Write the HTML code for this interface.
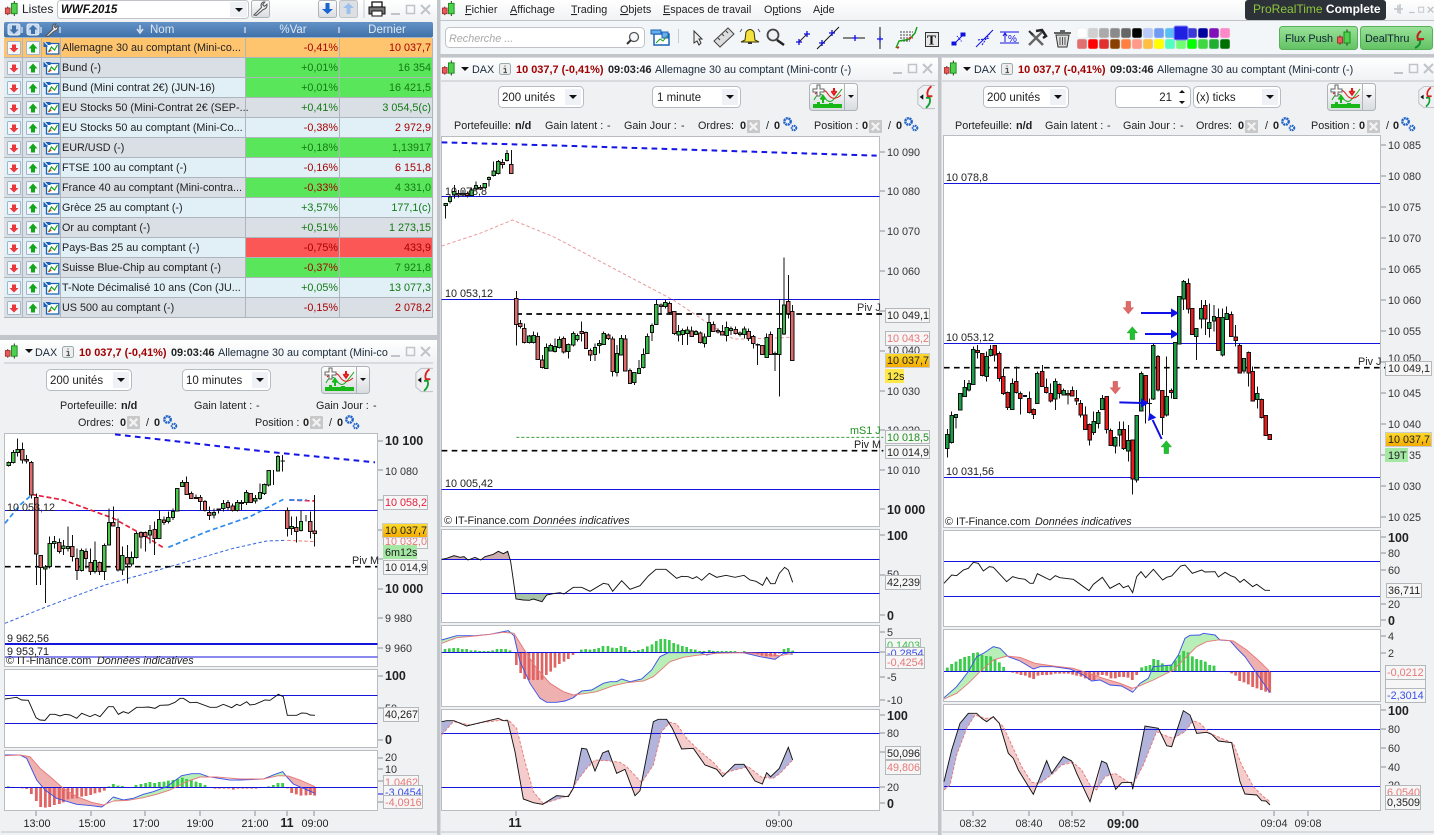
<!DOCTYPE html>
<html><head><meta charset="utf-8"><title>ProRealTime</title>
<style>
html,body{margin:0;padding:0;background:#eff1f3;width:1434px;height:835px;overflow:hidden}
svg{display:block;position:absolute;left:0;top:0}
text{font-family:"Liberation Sans",sans-serif;font-size:10.8px;fill:#222}
.b{font-weight:bold;font-size:10.9px}
.ax{font-size:10.8px;fill:#333}
.axb{font-size:12.5px;font-weight:bold;fill:#222}
.r{text-anchor:end}
.m{text-anchor:middle}
.tit{fill:#1a2a3a}
.pr{font-weight:bold;fill:#a00000;font-size:10.95px}
.u{text-decoration:underline}
.box{fill:#f6f6f6;stroke:#b4b8bb}
.sel{fill:#fff;stroke:#b6bcc2}
.ln{stroke:#1414dc;stroke-width:3;fill:none;shape-rendering:crispEdges}
.cw{stroke:#111;stroke-width:3;fill:none}
.mk{stroke:#8b9094;stroke-width:1;fill:none}
.bx{fill:#fff;stroke:#b9bdc1}
</style></head><body>
<svg width="1434" height="835" viewBox="0 0 1434 835" xmlns="http://www.w3.org/2000/svg">
<defs>
<linearGradient id="tb" x1="0" y1="0" x2="0" y2="1"><stop offset="0" stop-color="#fff"/><stop offset="1" stop-color="#f0f2f4"/></linearGradient>
<linearGradient id="hd" x1="0" y1="0" x2="0" y2="1"><stop offset="0" stop-color="#6292c6"/><stop offset="1" stop-color="#3f70a8"/></linearGradient>
<linearGradient id="yl" x1="0" y1="0" x2="0" y2="1"><stop offset="0" stop-color="#ffdc2e"/><stop offset="1" stop-color="#f2a900"/></linearGradient>
<linearGradient id="gb" x1="0" y1="0" x2="0" y2="1"><stop offset="0" stop-color="#9ae29a"/><stop offset="1" stop-color="#62c262"/></linearGradient>
<linearGradient id="bb" x1="0" y1="0" x2="0" y2="1"><stop offset="0" stop-color="#fff"/><stop offset="1" stop-color="#d8dce0"/></linearGradient>
<symbol id="lg" viewBox="0 0 16 17"><path d="M4 6V15M11 0V16" stroke="#222" fill="none"/><rect x="1.5" y="7.5" width="5" height="6" fill="#e85a5a" stroke="#a33"/><rect x="8" y="2.5" width="6" height="11" fill="#4fd04f" stroke="#1a8a1a"/></symbol>
<symbol id="sl" viewBox="0 0 14 14"><rect x=".5" y=".5" width="13" height="13" rx="1" fill="#f4f8fc" stroke="#a4b6c8"/><path d="M7 11.500L2.500 7H5V3.500H9V7H11.500Z" fill="#e8383c"/></symbol>
<symbol id="by" viewBox="0 0 14 14"><rect x=".5" y=".5" width="13" height="13" rx="1" fill="#f4f8fc" stroke="#a4b6c8"/><path d="M7 2.500L11.500 7.500H9V11.500H5V7.500H2.500Z" fill="#10a818"/></symbol>
<symbol id="ch" viewBox="0 0 16 14"><path d="M3 2.500H15.300V13H3Z" fill="#fff" stroke="#1c62b8" stroke-width="1.300"/><path d="M0 1H7V4H4V6H0Z" fill="#1c62b8"/><path d="M1 1L4 4" stroke="#fff"/><path d="M5 11L8 6L11 9L14 4" stroke="#1aa01a" fill="none" stroke-width="1.200"/><path d="M5 11L8 9" stroke="#e02020" fill="none"/></symbol>
<symbol id="ri" viewBox="0 0 53 14"><use href="#sl" x="0" y="0" width="14" height="14"/><use href="#by" x="19" y="0" width="14" height="14"/><use href="#ch" x="36" y="0" width="17" height="14"/></symbol>
<symbol id="wc" viewBox="0 0 40 12"><path d="M0 10H9" stroke="#c0c4c8" stroke-width="2"/><rect x="15.500" y="1.500" width="8" height="8" fill="none" stroke="#c0c4c8" stroke-width="1.500"/><path d="M30 1L39 10M39 1L30 10" stroke="#c0c4c8" stroke-width="2"/></symbol>
<symbol id="ib" viewBox="0 0 12 12"><rect x=".5" y=".5" width="11" height="11" rx="2" fill="#eee" stroke="#9aa"/><path d="M6 2.500V3.500M4.500 5.500H6.500V9M4.500 9.500H8" stroke="#555" fill="none" stroke-width="1.200"/></symbol>
<symbol id="or" viewBox="0 0 14 14"><rect x="0" y="0" width="14" height="14" rx="1" fill="#c8c8c8"/><path d="M3 3L11 11M11 3L3 11" stroke="#f2f2f2" stroke-width="2.500"/></symbol>
<symbol id="ge" viewBox="0 0 16 16"><circle cx="5.500" cy="5.500" r="3.200" fill="none" stroke="#1e62c8" stroke-width="2.400" stroke-dasharray="2 .6"/><circle cx="12" cy="12" r="2.300" fill="none" stroke="#1e62c8" stroke-width="2" stroke-dasharray="1.500 .6"/></symbol>
<symbol id="ind" viewBox="0 0 49 28"><rect x=".5" y=".5" width="48" height="27" rx="3" fill="url(#bb)" stroke="#aeb3b8"/><path d="M35.500 1V27" stroke="#aeb3b8"/><rect x="4" y="21" width="29" height="4" fill="#18b818"/><rect x="8" y="19" width="3" height="3" fill="#18b818"/><rect x="20" y="20" width="4" height="2" fill="#18b818"/><path d="M5 17Q10 7 15 14T24 17T33 6" stroke="#18a818" fill="none"/><path d="M6 11Q14 3 19 11T32 12" stroke="#e01818" fill="none"/><path d="M14 20V15M11.500 16.500L14 13L16.500 16.500" stroke="#18b818" fill="none" stroke-width="2"/><path d="M25 5V9M22.500 8L25 11.500L27.500 8" stroke="#e01818" fill="none" stroke-width="2"/><path d="M4 6H8V2H11V6H15V9H11V13H8V9H4Z" fill="#fff" stroke="#666"/><path d="M39 12H45L42 15Z" fill="#111"/></symbol>
<symbol id="tab" viewBox="0 0 20 28"><path d="M20 1H7L1 6V22L7 27H20" fill="#eef0f2" stroke="#b4b8bc"/><path d="M3 14L7 11V17Z" fill="#111"/><path d="M16 2Q10 7 12 13H17L11 14" stroke="#d82020" fill="none" stroke-width="2"/><path d="M10 26Q16 21 14 15H10" stroke="#10a030" fill="none" stroke-width="2"/></symbol>
<symbol id="wr" viewBox="0 0 14 14"><path d="M1 13L8 6Q6.500 2.500 9.500 1L11 1L9 3.500L10.500 5L13 3Q13.500 7 9.500 8L3 13.500Z" fill="#f4f4f4" stroke="#555"/></symbol>
</defs>

<!-- backgrounds -->
<rect width="1434" height="835" fill="#eff1f3"/>
<rect x="438" y="0" width="996" height="20" fill="url(#tb)"/>
<rect x="438" y="20" width="996" height="1" fill="#bfc4c8"/>
<rect x="438" y="21" width="996" height="33" fill="#f3f6f8"/>
<rect x="438" y="54" width="996" height="3.500" fill="#c2c6ca"/>
<rect x="0" y="0" width="437" height="21" fill="url(#tb)"/>
<rect x="0" y="335" width="437" height="5" fill="#c2c6ca"/>
<rect x="437" y="0" width="3.500" height="835" fill="#c2c6ca"/>
<rect x="938" y="57" width="3.500" height="778" fill="#c2c6ca"/>
<rect x="0" y="340" width="437" height="22" fill="url(#tb)"/>
<rect x="441" y="58" width="497" height="22" fill="url(#tb)"/>
<rect x="942" y="58" width="492" height="22" fill="url(#tb)"/>
<path d="M4 363H433M441 81H938M942 81H1434M1 832H437M441 832H938M942 832H1434" stroke="#c0c4c8"/>

<!-- Watchlist header -->
<use href="#lg" x="4" y="1" width="15" height="16"/>
<text x="22" y="13" style="font-size:12px">Listes</text>
<rect x="57.500" y=".5" width="191" height="18" rx="3" fill="#fff" stroke="#c0c4c8"/>
<text x="61" y="13" style="font-size:11.500px;font-weight:bold;font-style:italic;fill:#111">WWF.2015</text>
<rect x="230" y="2" width="17" height="15" fill="#eef2f6"/><path d="M235 8H243L239 12Z" fill="#111"/>
<rect x="251.500" y=".5" width="18" height="17" rx="2" fill="url(#bb)" stroke="#b0b4b8"/><use href="#wr" x="253" y="1" width="15" height="15"/>
<rect x="318.500" y=".5" width="18" height="17" rx="2" fill="url(#bb)" stroke="#b0b4b8"/><path d="M327.500 14L322 9H325.500V3H329.500V9H333Z" fill="#1a66d0"/>
<rect x="339.500" y=".5" width="18" height="17" rx="2" fill="#dde0e3" stroke="#c0c4c8"/><path d="M348.500 3L343 8H346.500V14H350.500V8H354Z" fill="#9cc0ec"/>
<path d="M364 0V18" stroke="#c8ccd0"/>
<path d="M372 2H382V7H372Z" fill="#fff" stroke="#111" stroke-width="1.300"/><path d="M369 7H385V14H369Z" fill="#777" stroke="#111"/><path d="M372 11H382V16H372Z" fill="#fff" stroke="#111"/>
<use href="#wc" x="391" y="4" width="40" height="12"/>

<rect x="4" y="22" width="429" height="15.500" rx="2" fill="url(#hd)"/>
<path d="M22 27V33M41 27V33M60 27V33M245 27V33M339 27V33" stroke="#fff"/>
<rect x="8" y="24" width="12" height="11" rx="2" fill="#c4d8ee" stroke="#e8f0f8"/><path d="M14 34L9.500 29.500H12V25.500H16V29.500H18.500Z" fill="#3f70a8"/>
<rect x="27" y="24" width="12" height="11" rx="2" fill="#c4d8ee" stroke="#e8f0f8"/><path d="M33 25L28.500 29.500H31V34H35V29.500H37.500Z" fill="#3f70a8"/>
<use href="#wr" x="45" y="23" width="14" height="14"/>
<path d="M140 25V31M137 29L140 33L143 29" stroke="#dde6f0" fill="none" stroke-width="1.500"/>
<text x="150" y="33" style="fill:#dfe8f2;font-size:11.500px">Nom</text>
<text x="293" y="33" class="m" style="fill:#dfe8f2;font-size:11.500px">%Var</text>
<text x="387" y="33" class="m" style="fill:#dfe8f2;font-size:11.500px">Dernier</text>

<!-- Rows -->
<g>
<rect x="4" y="38" width="429" height="20" fill="#ffc56e"/>
<rect x="4" y="58" width="429" height="20" fill="#d9dfe5"/>
<rect x="4" y="78" width="429" height="20" fill="#e1eff7"/>
<rect x="4" y="98" width="429" height="20" fill="#d9dfe5"/>
<rect x="4" y="118" width="429" height="20" fill="#e1eff7"/>
<rect x="4" y="138" width="429" height="20" fill="#d9dfe5"/>
<rect x="4" y="158" width="429" height="20" fill="#e1eff7"/>
<rect x="4" y="178" width="429" height="20" fill="#d9dfe5"/>
<rect x="4" y="198" width="429" height="20" fill="#e1eff7"/>
<rect x="4" y="218" width="429" height="20" fill="#d9dfe5"/>
<rect x="4" y="238" width="429" height="20" fill="#e1eff7"/>
<rect x="4" y="258" width="429" height="20" fill="#d9dfe5"/>
<rect x="4" y="278" width="429" height="20" fill="#e1eff7"/>
<rect x="4" y="298" width="429" height="20" fill="#d9dfe5"/>
<path d="M246 58h186v20h-186zM246 78h186v20h-186zM246 138h186v20h-186zM246 178h186v20h-186zM246 258h186v20h-186z" fill="#5ae65a"/>
<rect x="246" y="238" width="186" height="20" fill="#fb5757"/>
<path d="M4 57.500H433M4 77.500H433M4 97.500H433M4 117.500H433M4 137.500H433M4 157.500H433M4 177.500H433M4 197.500H433M4 217.500H433M4 237.500H433M4 257.500H433M4 277.500H433M4 297.500H433M4 317.500H433M22.500 38V318M41.500 38V318M60.500 38V318M245.500 38V318M339.500 38V318M432.500 38V318" stroke="#aeb5bb" fill="none"/>
<use href="#ri" x="7" y="41" width="53" height="14"/><use href="#ri" x="7" y="61" width="53" height="14"/><use href="#ri" x="7" y="81" width="53" height="14"/><use href="#ri" x="7" y="101" width="53" height="14"/><use href="#ri" x="7" y="121" width="53" height="14"/><use href="#ri" x="7" y="141" width="53" height="14"/><use href="#ri" x="7" y="161" width="53" height="14"/><use href="#ri" x="7" y="181" width="53" height="14"/><use href="#ri" x="7" y="201" width="53" height="14"/><use href="#ri" x="7" y="221" width="53" height="14"/><use href="#ri" x="7" y="241" width="53" height="14"/><use href="#ri" x="7" y="261" width="53" height="14"/><use href="#ri" x="7" y="281" width="53" height="14"/><use href="#ri" x="7" y="301" width="53" height="14"/>
</g>
<g style="fill:#111">
<text x="62" y="51">Allemagne 30 au comptant (Mini-co...</text>
<text x="62" y="71">Bund (-)</text>
<text x="62" y="91">Bund (Mini contrat 2€) (JUN-16)</text>
<text x="62" y="111">EU Stocks 50 (Mini-Contrat 2€ (SEP-...</text>
<text x="62" y="131">EU Stocks 50 au comptant (Mini-Co...</text>
<text x="62" y="151">EUR/USD (-)</text>
<text x="62" y="171">FTSE 100 au comptant (-)</text>
<text x="62" y="191">France 40 au comptant (Mini-contra...</text>
<text x="62" y="211">Grèce 25 au comptant (-)</text>
<text x="62" y="231">Or au comptant (-)</text>
<text x="62" y="251">Pays-Bas 25 au comptant (-)</text>
<text x="62" y="271">Suisse Blue-Chip au comptant (-)</text>
<text x="62" y="291">T-Note Décimalisé 10 ans (Con (JU...</text>
<text x="62" y="311">US 500 au comptant (-)</text>
</g>
<g class="r" style="text-anchor:end">
<text x="338" y="51" style="fill:#a80000">-0,41%</text><text x="431" y="51" style="fill:#a80000">10 037,7</text>
<text x="338" y="131" style="fill:#a80000">-0,38%</text><text x="431" y="131" style="fill:#a80000">2 972,9</text>
<text x="338" y="171" style="fill:#a80000">-0,16%</text><text x="431" y="171" style="fill:#a80000">6 151,8</text>
<text x="338" y="191" style="fill:#a80000">-0,33%</text>
<text x="338" y="251" style="fill:#a80000">-0,75%</text><text x="431" y="251" style="fill:#a80000">433,9</text>
<text x="338" y="271" style="fill:#a80000">-0,37%</text>
<text x="338" y="311" style="fill:#a80000">-0,15%</text><text x="431" y="311" style="fill:#a80000">2 078,2</text>
<text x="338" y="71" style="fill:#127a12">+0,01%</text><text x="431" y="71" style="fill:#127a12">16 354</text>
<text x="338" y="91" style="fill:#127a12">+0,01%</text><text x="431" y="91" style="fill:#127a12">16 421,5</text>
<text x="338" y="111" style="fill:#127a12">+0,41%</text><text x="431" y="111" style="fill:#127a12">3 054,5(c)</text>
<text x="338" y="151" style="fill:#127a12">+0,18%</text><text x="431" y="151" style="fill:#127a12">1,13917</text>
<text x="431" y="191" style="fill:#127a12">4 331,0</text>
<text x="338" y="211" style="fill:#127a12">+3,57%</text><text x="431" y="211" style="fill:#127a12">177,1(c)</text>
<text x="338" y="231" style="fill:#127a12">+0,51%</text><text x="431" y="231" style="fill:#127a12">1 273,15</text>
<text x="431" y="271" style="fill:#127a12">7 921,8</text>
<text x="338" y="291" style="fill:#127a12">+0,05%</text><text x="431" y="291" style="fill:#127a12">13 077,3</text>
</g>

<!-- Menu -->
<use href="#lg" x="441" y="1" width="15" height="16"/>
<g style="fill:#111">
<text x="465" y="13"><tspan class="u">F</tspan>ichier</text>
<text x="510" y="13"><tspan class="u">A</tspan>ffichage</text>
<text x="571" y="13"><tspan class="u">T</tspan>rading</text>
<text x="620" y="13"><tspan class="u">O</tspan>bjets</text>
<text x="663" y="13"><tspan class="u">E</tspan>spaces de travail</text>
<text x="764" y="13">O<tspan class="u">p</tspan>tions</text>
<text x="813" y="13">A<tspan class="u">i</tspan>de</text>
</g>
<rect x="1245" y="0" width="141" height="20" rx="3" fill="#2c3238"/>
<text x="1253" y="13" style="font-size:12px;fill:#8fc63d">ProRealTime <tspan style="fill:#fff;font-weight:bold">Complete</tspan></text>
<path d="M1394 9H1403M1398 5V13M1400 4V14" stroke="#c0c4c8" stroke-width="1.500" fill="none"/>
<use href="#wc" x="1409" y="4" width="25" height="12" preserveAspectRatio="xMinYMid slice"/>

<!-- Toolbar -->
<rect x="445.500" y="27.500" width="199" height="20" rx="4" fill="#fff" stroke="#c0c4c8"/>
<text x="449" y="42" style="font-style:italic;fill:#a8a8a8">Recherche ...</text>
<circle cx="634" cy="37" r="4.500" fill="#f4f8fc" stroke="#555" stroke-width="1.300"/><path d="M631 40L627 44" stroke="#333" stroke-width="2"/>
<path d="M654 34H669V45H654Z" fill="#fff" stroke="#1c62b8" stroke-width="1.500"/><path d="M651 30H661V34H651Z" fill="#64b0ea" stroke="#1c62b8"/><path d="M662 32H668V38H662Z" fill="#64b0ea" stroke="#1c62b8"/><path d="M656 43L660 39L663 41L667 36" stroke="#18a018" fill="none"/>
<path d="M678.500 29V43" stroke="#c8ccd0"/>
<path d="M694 31L702 39H699L701 43L699 45L697 41L694 43Z" fill="#eee" stroke="#333"/>
<path d="M714 41L728 28L734 34L720 47Z" fill="#ddd" stroke="#444"/><path d="M718 38L720 40M722 34L724 36M726 31L728 33" stroke="#444"/>
<path d="M741 42L745 40L746 32Q750 27 754 32L755 40L759 42Z" fill="#f4e040" stroke="#3a3a00"/><path d="M748 43H752" stroke="#333" stroke-width="2"/><path d="M740 32L742 29M760 32L758 29" stroke="#555"/>
<circle cx="773" cy="35" r="5.500" fill="#eef2f6" stroke="#444" stroke-width="1.800"/><path d="M777 40L784 45" stroke="#222" stroke-width="2.500"/>
<path d="M799 42L807 34" stroke="#222"/>
<path d="M817 49L839 27M843 38H865M880 27V49" stroke="#111"/>
<path d="M796 42h6M799 39v6M804 34h6M807 31v6M819 43h6M822 40v6M829 33h6M832 30v6M852 38h6M855 35v6M877 39h6M880 36v6" stroke="#1010e0" fill="none" stroke-width="1.300"/>
<path d="M900 32H913M900 35H913M900 38H913M900 41H910" stroke="#444" stroke-dasharray="2 1"/>
<path d="M896 48L899 41L905 40L910 39L915 33L917 27" stroke="#10a010" fill="none" stroke-width="1.400"/><path d="M897 48L899 47M909 39L911 37" stroke="#e02020" stroke-width="2"/>
<rect x="925.500" y="32.500" width="13" height="14" fill="#e8e8e8" stroke="#333"/><text x="927" y="44.500" style="font-family:'Liberation Serif',serif;font-weight:bold;font-size:13.500px;fill:#111">T</text>
<path d="M954 44L964 34" stroke="#1010e0"/><path d="M952 42h4v3h-4zM961 33h4v3h-4z" fill="#1010e0" stroke="#1010e0"/><path d="M957 36L962 42" stroke="#1010e0" stroke-dasharray="1 1"/>
<path d="M976 47L993 30" stroke="#1010e0" fill="none"/><path d="M978 40L990 38M982 45l8-12" stroke="#1010e0" fill="none" stroke-dasharray="2 1"/>
<path d="M1000 32H1019M1000 43H1019" stroke="#1010e0"/><path d="M1005 42V34M1003 36L1005 33L1007 36" stroke="#1010e0" fill="none"/><text x="1008" y="42" style="font-size:10px;fill:#1010e0">%</text>
<path d="M1029 45L1042 32" stroke="#fff" stroke-width="3.500"/><path d="M1029 45L1042 32M1031 33L1043 45" stroke="#666" stroke-width="2.500"/><path d="M1036 31L1042 30L1046 36L1043 38" stroke="#222" stroke-width="2.500" fill="none"/><path d="M1029 31L1033 35" stroke="#333" stroke-width="2"/>
<path d="M1056 35H1069L1067 47H1058Z" fill="#ddd" stroke="#333"/><path d="M1054 33H1071M1060 31H1065" stroke="#333" stroke-width="1.500"/><path d="M1060 37V45M1062.500 37V45M1065 37V45" stroke="#555"/>
<!-- palette -->
<g stroke="#e0e4e8" stroke-width=".5">
<rect x="1077" y="28" width="10" height="10" rx="2" fill="#fff"/><rect x="1088" y="28" width="10" height="10" rx="2" fill="#d0d0d0"/><rect x="1099" y="28" width="10" height="10" rx="2" fill="#aaa"/><rect x="1110" y="28" width="10" height="10" rx="2" fill="#8a8a8a"/><rect x="1121" y="28" width="10" height="10" rx="2" fill="#666"/><rect x="1132" y="28" width="10" height="10" rx="2" fill="#000"/><rect x="1143" y="28" width="10" height="10" rx="2" fill="#b8caf8"/><rect x="1154" y="28" width="10" height="10" rx="2" fill="#6e9cf4"/><rect x="1165" y="28" width="10" height="10" rx="2" fill="#56c0f4"/><rect x="1187" y="28" width="10" height="10" rx="2" fill="#3a3ad8"/><rect x="1198" y="28" width="10" height="10" rx="2" fill="#00009c"/><rect x="1209" y="28" width="10" height="10" rx="2" fill="#8010b8"/><rect x="1220" y="28" width="10" height="10" rx="2" fill="#ff88c8"/>
<rect x="1077" y="39" width="10" height="10" rx="2" fill="#e07070"/><rect x="1088" y="39" width="10" height="10" rx="2" fill="#f00"/><rect x="1099" y="39" width="10" height="10" rx="2" fill="#e03030"/><rect x="1110" y="39" width="10" height="10" rx="2" fill="#8a4000"/><rect x="1121" y="39" width="10" height="10" rx="2" fill="#ff8040"/><rect x="1132" y="39" width="10" height="10" rx="2" fill="#ff9a88"/><rect x="1143" y="39" width="10" height="10" rx="2" fill="#ffc040"/><rect x="1154" y="39" width="10" height="10" rx="2" fill="#ff0"/><rect x="1165" y="39" width="10" height="10" rx="2" fill="#50ffc0"/><rect x="1176" y="39" width="10" height="10" rx="2" fill="#70ff70"/><rect x="1187" y="39" width="10" height="10" rx="2" fill="#0f0"/><rect x="1198" y="39" width="10" height="10" rx="2" fill="#40d840"/><rect x="1209" y="39" width="10" height="10" rx="2" fill="#20b030"/><rect x="1220" y="39" width="10" height="10" rx="2" fill="#007000"/>
</g>
<rect x="1174" y="26" width="14" height="14" rx="2" fill="#2020e0" stroke="#8888ff"/>
<rect x="1279.500" y="26.500" width="78" height="23" rx="3" fill="url(#gb)" stroke="#58b058"/>
<text x="1285" y="42" style="fill:#123">Flux Push</text><use href="#lg" x="1336" y="29" width="16" height="18"/>
<rect x="1360.500" y="26.500" width="72" height="23" rx="3" fill="url(#gb)" stroke="#58b058"/>
<text x="1365" y="42" style="fill:#123">DealThru</text>
<path d="M1421 31Q1416 35 1418 39H1424L1417 40" stroke="#c02020" fill="none" stroke-width="2"/><path d="M1415 48Q1421 45 1420 40" stroke="#109030" fill="none" stroke-width="2"/>

<!-- Window titles -->
<use href="#lg" x="441" y="60" width="15" height="17"/><path d="M461 67h8l-4 4z" fill="#111"/>
<text x="472" y="73" class="tit">DAX</text><use href="#ib" x="499" y="63" width="12" height="12"/>
<text x="516" y="73" class="pr">10 037,7 (-0,41%)</text><text x="608" y="73" class="b">09:03:46</text>
<text x="655" y="73" class="tit">Allemagne 30 au comptant (Mini-contr (-)</text>
<use href="#wc" x="893" y="63" width="40" height="12"/>
<use href="#lg" x="943" y="60" width="15" height="17"/><path d="M963 67h8l-4 4z" fill="#111"/>
<text x="974" y="73" class="tit">DAX</text><use href="#ib" x="1001" y="63" width="12" height="12"/>
<text x="1018" y="73" class="pr">10 037,7 (-0,41%)</text><text x="1110" y="73" class="b">09:03:46</text>
<text x="1157" y="73" class="tit">Allemagne 30 au comptant (Mini-contr (-)</text>
<use href="#wc" x="1394" y="63" width="40" height="12"/>
<use href="#lg" x="4" y="343" width="15" height="17"/><path d="M25 349h8l-4 4z" fill="#111"/>
<text x="35" y="356" class="tit">DAX</text><use href="#ib" x="62" y="346" width="12" height="12"/>
<text x="79" y="356" class="pr">10 037,7 (-0,41%)</text><text x="171" y="356" class="b">09:03:46</text>
<text x="218" y="356" class="tit">Allemagne 30 au comptant (Mini-co</text>
<use href="#wc" x="391" y="346" width="40" height="12"/>

<!-- Selects -->
<rect x="498.500" y="86.500" width="85" height="21" rx="4" class="sel"/><text x="502" y="101" style="font-size:11.500px">200 unités</text><rect x="565" y="89" width="16" height="16" fill="#eef2f6"/><path d="M569 95h8l-4 4z" fill="#111"/>
<rect x="652.500" y="86.500" width="88" height="21" rx="4" class="sel"/><text x="657" y="101" style="font-size:11.500px">1 minute</text><rect x="722" y="89" width="16" height="16" fill="#eef2f6"/><path d="M726 95h8l-4 4z" fill="#111"/>
<use href="#ind" x="809" y="83" width="49" height="28"/><use href="#tab" x="917" y="83" width="18" height="28"/>
<rect x="983.500" y="86.500" width="85" height="21" rx="4" class="sel"/><text x="987" y="101" style="font-size:11.500px">200 unités</text><rect x="1050" y="89" width="16" height="16" fill="#eef2f6"/><path d="M1054 95h8l-4 4z" fill="#111"/>
<rect x="1115.500" y="86.500" width="75" height="21" rx="4" class="sel"/><text x="1172" y="101" class="r" style="font-size:11.500px;text-anchor:end">21</text><path d="M1179 93l3-3l3 3zM1179 101l3 3l3-3z" fill="#111"/>
<rect x="1193.500" y="86.500" width="87" height="21" rx="4" class="sel"/><text x="1196" y="101" style="font-size:11.500px">(x) ticks</text><rect x="1262" y="89" width="16" height="16" fill="#eef2f6"/><path d="M1266 95h8l-4 4z" fill="#111"/>
<use href="#ind" x="1327" y="83" width="49" height="28"/><use href="#tab" x="1418" y="83" width="16" height="28"/>
<rect x="46.500" y="369.500" width="85" height="21" rx="4" class="sel"/><text x="50" y="384" style="font-size:11.500px">200 unités</text><rect x="113" y="372" width="16" height="16" fill="#eef2f6"/><path d="M117 378h8l-4 4z" fill="#111"/>
<rect x="182.500" y="369.500" width="88" height="21" rx="4" class="sel"/><text x="186" y="384" style="font-size:11.500px">10 minutes</text><rect x="252" y="372" width="16" height="16" fill="#eef2f6"/><path d="M256 378h8l-4 4z" fill="#111"/>
<use href="#ind" x="321" y="366" width="49" height="28"/><use href="#tab" x="415" y="366" width="18" height="28"/>

<!-- Info rows -->
<g style="fill:#111">
<text x="454" y="129">Portefeuille:</text><text x="515" y="129" class="b">n/d</text><text x="545" y="129">Gain latent :</text><text x="607" y="129">-</text><text x="624" y="129">Gain Jour :</text><text x="681" y="129">-</text><text x="698" y="129">Ordres:</text><text x="740" y="129" class="b">0</text><use href="#or" x="747" y="120" width="13" height="13"/><text x="766" y="129">/</text><text x="774" y="129" class="b">0</text><use href="#ge" x="782" y="116" width="16" height="16"/><text x="814" y="129">Position :</text><text x="862" y="129" class="b">0</text><use href="#or" x="869" y="120" width="13" height="13"/><text x="888" y="129">/</text><text x="896" y="129" class="b">0</text><use href="#ge" x="903" y="116" width="16" height="16"/>
<text x="955" y="129">Portefeuille:</text><text x="1016" y="129" class="b">n/d</text><text x="1045" y="129">Gain latent :</text><text x="1107" y="129">-</text><text x="1123" y="129">Gain Jour :</text><text x="1180" y="129">-</text><text x="1196" y="129">Ordres:</text><text x="1238" y="129" class="b">0</text><use href="#or" x="1245" y="120" width="13" height="13"/><text x="1265" y="129">/</text><text x="1273" y="129" class="b">0</text><use href="#ge" x="1280" y="116" width="16" height="16"/><text x="1311" y="129">Position :</text><text x="1359" y="129" class="b">0</text><use href="#or" x="1367" y="120" width="13" height="13"/><text x="1386" y="129">/</text><text x="1393" y="129" class="b">0</text><use href="#ge" x="1400" y="116" width="16" height="16"/>
<text x="60" y="409">Portefeuille:</text><text x="121" y="409" class="b">n/d</text><text x="194" y="409">Gain latent :</text><text x="256" y="409">-</text><text x="316" y="409">Gain Jour :</text><text x="373" y="409">-</text>
<text x="78" y="426">Ordres:</text><text x="120" y="426" class="b">0</text><use href="#or" x="127" y="416" width="13" height="13"/><text x="146" y="426">/</text><text x="154" y="426" class="b">0</text><use href="#ge" x="162" y="414" width="16" height="16"/><text x="255" y="426">Position :</text><text x="303" y="426" class="b">0</text><use href="#or" x="310" y="416" width="13" height="13"/><text x="329" y="426">/</text><text x="337" y="426" class="b">0</text><use href="#ge" x="344" y="414" width="16" height="16"/>
</g>

<!-- Chart frames -->
<rect x="4.500" y="433.500" width="373" height="233" class="bx"/><rect x="4.500" y="669.500" width="373" height="78" class="bx"/><rect x="4.500" y="750.500" width="373" height="60" class="bx"/>
<rect x="441.500" y="136.500" width="438" height="390" class="bx"/><rect x="441.500" y="529.500" width="438" height="93" class="bx"/><rect x="441.500" y="625.500" width="438" height="81" class="bx"/><rect x="441.500" y="709.500" width="438" height="101" class="bx"/>
<rect x="943.500" y="135.500" width="437" height="392" class="bx"/><rect x="943.500" y="530.500" width="437" height="96" class="bx"/><rect x="943.500" y="629.500" width="437" height="72" class="bx"/><rect x="943.500" y="704.500" width="437" height="106" class="bx"/>

<!-- MIDDLE main chart (zoom coords) -->
<g transform="translate(440,135) scale(.33333)">
<path d="M5 184H1318M5 493H1318M5 1063H1318" class="ln"/>
<path d="M5 333L120 295L217 255L340 305L700 495L800 562L880 612L920 612L1055 607" stroke="#e89a9a" stroke-width="3" fill="none" stroke-dasharray="10 7"/>
<path d="M5 22L400 33L1310 62" stroke="#1414e6" stroke-width="6" fill="none" stroke-dasharray="17 13"/>
<path d="M229 537H1330M5 947H1330" stroke="#000" stroke-width="5" fill="none" stroke-dasharray="17 13"/>
<path d="M229 907H1330" stroke="#209020" stroke-width="2.500" fill="none" stroke-dasharray="9 6"/>
<g shape-rendering="crispEdges">
<path class="cw" d="M17 205V250M30 180V205M43 150V190M56 165V188M69 165V185M82 170V188M95 158V183M108 140V165M121 150V165M134 145V160M147 125V155M161 80V125M175 75V118M188 72V100M201 45V80M214 45V115M229 468V632M241 555V580M253 565V625M268 600V625M281 590V625M293 592V675M307 660V700M319 625V700M332 625V650M345 610V652M358 605V640M371 605V655M385 625V670M400 590V635M412 595V620M425 560V620M438 590V640M451 640V678M465 625V678M478 615V655M491 590V630M505 595V615M518 605V725M531 630V725M544 600V660M556 600V710M570 700V745M583 712V750M597 675V715M610 640V700M622 595V655M636 565V618M649 495V570M663 505V540M676 495V520M689 500V540M703 528V600M716 570V620M728 580V630M742 575V630M755 575V605M768 585V600M781 590V625M794 595V638M807 535V605M820 560V590M834 580V595M847 570V600M860 560V620M873 575V600M887 575V598M900 590V605M913 575V610M926 580V618M940 600V640M953 625V690M967 630V660M980 595V668M992 590V660M1005 650V708M1018 492V785M1032 367V600M1045 420V550M1057 510V678"/>
<path fill="#38bf4a" stroke="#111" stroke-width="3" d="M12 205h10v6h-10zM25 186h10v14h-10zM38 170h10v10h-10zM90 165h10v16h-10zM103 152h10v10h-10zM129 146h10v11h-10zM142 127h10v6h-10zM156 108h10v13h-10zM170 80h10v35h-10zM196 56h10v20h-10zM263 603h10v19h-10zM276 601h10v21h-10zM314 638h10v62h-10zM327 632h10v16h-10zM340 634h10v16h-10zM353 614h10v23h-10zM380 628h10v22h-10zM395 596h10v34h-10zM407 601h10v13h-10zM460 638h10v20h-10zM473 626h10v6h-10zM486 595h10v33h-10zM526 655h10v57h-10zM539 610h10v50h-10zM578 712h10v30h-10zM592 700h10v15h-10zM605 658h10v40h-10zM617 604h10v51h-10zM631 571h10v21h-10zM644 508h10v60h-10zM671 503h10v12h-10zM711 590h10v10h-10zM723 587h10v11h-10zM737 585h10v11h-10zM763 590h10v8h-10zM789 606h10v19h-10zM802 562h10v42h-10zM855 577h10v24h-10zM868 580h10v7h-10zM895 594h10v4h-10zM908 582h10v16h-10zM975 607h10v60h-10zM1000 655h10v3h-10zM1013 580h10v78h-10zM1027 510h10v87h-10z"/>
<path fill="#e06a6a" stroke="#111" stroke-width="3" d="M51 175h10v5h-10zM64 176h10v4h-10zM77 176h10v5h-10zM116 157h10v5h-10zM183 83h10v5h-10zM209 88h10v27h-10zM224 490h10v78h-10zM236 566h10v9h-10zM248 580h10v42h-10zM288 604h10v69h-10zM302 675h10v23h-10zM366 611h10v40h-10zM420 590h10v6h-10zM433 593h10v47h-10zM446 646h10v14h-10zM500 600h10v10h-10zM513 612h10v98h-10zM551 612h10v96h-10zM565 707h10v38h-10zM658 510h10v4h-10zM684 505h10v27h-10zM698 530h10v66h-10zM750 588h10v16h-10zM776 594h10v28h-10zM815 569h10v21h-10zM829 586h10v5h-10zM842 590h10v10h-10zM882 583h10v12h-10zM921 590h10v20h-10zM935 605h10v20h-10zM948 628h10v2h-10zM962 632h10v26h-10zM987 598h10v60h-10zM1040 499h10v36h-10zM1052 530h10v147h-10z"/>
</g></g>
<text x="445" y="195">10 078,8</text><text x="445" y="297">10 053,12</text><text x="445" y="487">10 005,42</text>
<text x="857" y="311" class="ax" style="font-size:11px">Piv J</text><text x="850" y="434" style="fill:#209020">mS1 J</text><text x="854" y="448">Piv M</text>
<text x="444" y="524" style="fill:#222">© IT-Finance.com  <tspan x="533" style="font-style:italic">Données indicatives</tspan></text>

<!-- MIDDLE indicators -->
<g transform="translate(440,525) scale(.33333)">
<path d="M5 103L20 100L42 92L60 97L72 95L84 105L105 97L122 105L135 95L160 88L175 79L190 86L203 79L212 103Z" fill="#cdaeae"/>
<path d="M228 205L228 222L250 225L268 226L280 222L306 230L320 210L330 205Z" fill="#a8c2a8"/>
<path class="ln" d="M5 103H1318M5 205H1318"/>
<path stroke="#111" stroke-width="2.800" fill="none" d="M5 103L20 100L42 92L60 97L72 95L84 105L105 97L122 105L135 95L160 88L175 79L190 86L203 79L212 110L228 222L250 225L268 226L280 222L306 230L320 210L345 205L360 203L372 207L400 187L425 187L450 199L490 175L505 178L518 199L545 167L570 193L600 182L625 153L648 133L678 133L710 160L725 154L745 155L758 161L770 155L785 166L808 145L830 157L858 151L885 157L912 151L930 165L948 169L968 181L980 157L992 176L1005 176L1018 145L1034 127L1045 135L1058 172"/>
<!-- macd -->
<path d="M5 355L50 338L105 333L150 328L190 322L222 325L205 317L150 328L105 332L50 332L5 345Z" fill="#b8efb8"/>
<path d="M222 325L250 370L290 430L330 475L370 500L400 510L425 498L400 518L375 528L350 532L320 532L300 520L270 475L240 410L222 332Z" fill="#efb0b0"/>
<path d="M425 498L455 495L490 475L510 470L530 470L545 462L570 470L605 462L635 435L660 395L685 383L780 383L800 390L770 391L730 397L690 410L640 455L610 468L560 473L520 482L470 500L440 505L410 510Z" fill="#b8efb8"/>
<path d="M900 383L960 395L1005 403L1030 385L1020 392L960 385Z" fill="#efb0b0"/>
<path stroke-width="8" fill="none" stroke="#3ccc4c" d="M15 382V372M28 382V370M41 382V369M54 382V369M67 382V372M80 382V372M93 382V376M106 382V376M119 382V378M132 382V378M145 382V378M158 382V376M171 382V372M184 382V372M197 382V372M210 382V376M424 382V374M437 382V372M450 382V374M463 382V372M476 382V369M489 382V363M504 382V363M517 382V368M530 382V369M543 382V363M556 382V366M569 382V375M582 382V378M595 382V375M608 382V372M622 382V364M636 382V358M649 382V348M662 382V342M675 382V342M688 382V345M701 382V354M714 382V358M727 382V363M740 382V366M753 382V372M766 382V374M779 382V378M792 382V378M808 382V375M820 382V378M833 382V378M846 382V378M859 382V378M872 382V378M885 382V378M913 382V378M1032 382V372M1045 382V369M1058 382V377"/>
<path stroke-width="8" fill="none" stroke="#e06464" d="M229 382V420M242 382V444M254 382V462M267 382V465M280 382V465M293 382V465M306 382V464M319 382V450M332 382V440M345 382V428M358 382V417M372 382V410M385 382V402M399 382V390M940 382V386M953 382V388M966 382V392M979 382V394M992 382V394M1005 382V394M1018 382V386"/>
<path class="ln" d="M5 382H1318"/>
<path stroke="#3a50e8" stroke-width="2.800" fill="none" d="M5 345L50 332L105 332L150 328L205 317L222 332L240 410L270 475L300 520L320 532L350 532L375 528L400 518L425 498L455 495L490 475L510 470L530 470L545 462L570 470L605 462L635 435L660 395L685 383L780 383L800 390L830 383L910 383L960 395L1005 403L1030 385L1058 388"/>
<path stroke="#e87878" stroke-width="2.800" fill="none" d="M5 355L50 338L105 333L150 328L190 322L222 325L250 370L290 430L330 475L370 500L400 510L440 505L470 500L520 482L560 473L610 468L640 455L690 410L730 397L770 391L830 385L900 383L960 385L1020 392L1058 385"/>
<!-- sto -->
<path fill="#f4cccc" d="M5 590L20 587L42 587L80 603L125 592L175 580L190 587L203 587L225 680L250 822L280 833L308 838L350 812L385 815L400 790L425 670L440 672L465 738L488 684L505 677L530 745L555 733L585 812L600 797L640 590L655 583L680 583L697 610L725 672L760 670L795 720L830 733L848 755L885 718L912 718L945 768L967 777L980 743L992 755L1018 730L1045 667L1058 705L1020 745L1000 760L965 757L925 725L885 735L850 745L820 712L770 670L740 640L710 597L690 592L665 620L640 720L605 773L560 725L540 712L500 707L465 705L440 730L410 770L385 812L345 825L310 836L280 800L255 710L230 610L205 585L175 587L130 592L90 600L40 590L5 630Z"/>
<path fill="#b2b4dc" d="M5 590L20 587L40 590L5 630ZM308 838L350 812L385 815L400 790L425 670L440 672L455 712L440 730L410 770L385 812L345 825ZM480 707L488 684L505 677L515 708ZM600 797L640 590L655 583L680 583L690 592L665 620L640 720L605 773ZM885 718L912 718L925 725L885 735L870 738ZM980 743L992 755L1018 730L1045 667L1058 705L1020 745L1000 760L985 759Z"/>
<path class="ln" d="M5 625H1318M5 787H1318"/>
<path stroke="#e87878" stroke-width="2.800" fill="none" stroke-dasharray="9 5" d="M5 630L40 590L90 600L130 592L175 587L205 585L230 610L255 710L280 800L310 836L345 825L385 812L410 770L440 730L465 705L500 707L540 712L560 725L605 773L640 720L665 620L690 592L710 597L740 640L770 670L820 712L850 745L885 735L925 725L965 757L1000 760L1020 745L1058 705"/>
<path stroke="#111" stroke-width="2.800" fill="none" d="M5 590L20 587L42 587L80 603L125 592L175 580L190 587L203 587L225 680L250 822L280 833L308 838L350 812L385 815L400 790L425 670L440 672L465 738L488 684L505 677L530 745L555 733L585 812L600 797L640 590L655 583L680 583L697 610L725 672L760 670L795 720L830 733L848 755L885 718L912 718L945 768L967 777L980 743L992 755L1018 730L1045 667L1058 705"/>
</g>

<!-- RIGHT main chart -->
<g transform="translate(940,135) scale(.33333)">
<path class="ln" d="M12 145H1320M12 625H1320M12 1027H1320"/>
<path d="M12 698H1335" stroke="#000" stroke-width="5" fill="none" stroke-dasharray="17 13"/>
<g shape-rendering="crispEdges">
<path class="cw" d="M22 882V968M35 830V925M48 838V880M61 775V825M74 735V785M87 735V770M100 635V750M113 630V670M127 655V725M140 650V740M152 630V665M164 630V680M178 650V740M190 700V780M203 770V825M217 730V825M229 695V775M241 770V838M255 780V785M268 770V835M281 820V852M292 710V805M307 690V755M319 730V775M332 745V802M346 730V825M358 745V790M371 760V782M384 765V808M397 755V785M410 765V810M422 795V848M436 815V885M449 865V932M461 830V900M475 825V880M487 780V825M500 785V895M512 880V930M526 905V955M539 860V935M551 860V945M565 870V980M578 915V1078M590 842V1042M604 710V830M617 720V865M629 790V840M640 625V795M654 660V770M667 765V900M680 665V845M694 760V790M706 625V790M718 485V628M731 435V525M745 430V535M757 520V600M769 580V675M784 495V580M796 495V600M808 505V608M822 510V590M835 520V648M848 520V665M860 515V555M874 530V605M887 570V635M899 625V715M912 670V715M926 650V755M938 695V800M952 755V820M965 790V850M977 840V902M989 898V913M622 805H636"/>
<path fill="#18a048" stroke="#111" stroke-width="3" d="M17 898h10v42h-10zM30 841h10v81h-10zM43 838h10v10h-10zM56 775h10v50h-10zM69 757h10v28h-10zM82 745h10v20h-10zM95 643h10v105h-10zM135 665h10v60h-10zM147 643h10v19h-10zM212 745h10v78h-10zM287 715h10v90h-10zM341 740h10v52h-10zM366 767h10v13h-10zM456 860h10v32h-10zM470 832h10v33h-10zM482 790h10v33h-10zM521 908h10v25h-10zM534 883h10v17h-10zM560 917h10v31h-10zM585 842h10v193h-10zM599 716h10v112h-10zM635 632h10v160h-10zM675 785h10v55h-10zM701 623h10v167h-10zM713 485h10v142h-10zM726 440h10v52h-10zM764 581h10v23h-10zM779 520h10v32h-10zM803 562h10v19h-10zM817 544h10v14h-10zM843 548h10v112h-10zM855 535h10v18h-10zM907 671h10v37h-10zM947 775h10v18h-10z"/>
<path fill="#f01818" stroke="#111" stroke-width="3" d="M108 646h10v6h-10zM122 656h10v66h-10zM159 632h10v28h-10zM173 656h10v74h-10zM185 725h10v50h-10zM198 772h10v46h-10zM224 740h10v33h-10zM236 775h10v15h-10zM250 781h10v3h-10zM263 790h10v43h-10zM276 823h10v15h-10zM302 710h10v45h-10zM314 757h10v15h-10zM327 775h10v23h-10zM353 748h10v27h-10zM379 775h10v5h-10zM392 766h10v17h-10zM405 790h10v8h-10zM417 805h10v35h-10zM431 840h10v43h-10zM444 868h10v47h-10zM495 785h10v98h-10zM507 887h10v45h-10zM546 884h10v56h-10zM573 915h10v117h-10zM612 722h10v83h-10zM649 665h10v100h-10zM662 766h10v81h-10zM689 767h10v6h-10zM740 446h10v76h-10zM752 520h10v78h-10zM791 512h10v40h-10zM830 547h10v99h-10zM869 538h10v67h-10zM882 606h10v10h-10zM894 631h10v83h-10zM921 652h10v62h-10zM933 710h10v88h-10zM960 793h10v55h-10zM972 841h10v60h-10zM984 899h10v14h-10z"/>
</g>
<path d="M603 534H697M615 597H697M538 802L605 804M665 912L638 855" stroke="#1010e8" stroke-width="6" fill="none"/>
<path d="M693 520L716 534L693 548ZM693 583L716 597L693 611ZM603 790L626 804L603 818ZM624 858L628 833L649 848Z" fill="#1010e8"/>
<path d="M565 537L549 518H558V499H572V518H581Z" fill="#e06a6a" stroke="#c04040"/><path d="M526 777L510 758H519V739H533V758H542Z" fill="#e06a6a" stroke="#c04040"/>
<path d="M577 575L561 594H570V614H584V594H593Z" fill="#20c030" stroke="#109020"/><path d="M679 917L663 936H672V956H686V936H695Z" fill="#20c030" stroke="#109020"/>
</g>
<text x="946" y="181">10 078,8</text><text x="946" y="341">10 053,12</text><text x="946" y="475">10 031,56</text><text x="1358" y="365">Piv J</text>
<text x="945" y="525">© IT-Finance.com  <tspan x="1035" style="font-style:italic">Données indicatives</tspan></text>

<!-- RIGHT indicators -->
<g transform="translate(940,525) scale(.33333)">
<path class="ln" d="M12 109H1320M12 214H1320"/>
<path stroke="#111" stroke-width="2.800" fill="none" d="M12 175L35 150L50 152L70 135L85 130L100 112L115 115L130 138L148 125L160 127L200 170L218 155L235 160L255 163L270 175L280 175L292 146L330 165L346 152L360 158L400 163L447 197L460 178L487 157L510 190L538 175L550 188L565 182L578 203L590 155L603 140L617 158L640 133L668 165L680 157L695 153L722 123L735 120L757 145L785 135L795 141L825 140L835 156L855 142L872 152L885 157L900 172L912 163L938 185L950 178L975 196L990 196"/>
<path fill="#b8efb8" d="M12 518L50 485L85 440L110 395L130 385L160 365L180 370L205 395L160 405L120 440L85 475L50 505L12 522ZM578 502L600 475L625 460L640 425L695 420L715 390L735 340L750 331L780 330L790 325L825 330L840 345L800 350L770 365L740 395L700 435L640 465L600 482Z"/>
<path fill="#efb0b0" d="M205 395L240 408L280 432L300 425L340 425L390 432L430 450L455 468L480 465L510 480L545 483L578 502L578 490L540 475L490 460L440 443L400 430L340 423L285 415L240 397ZM840 345L870 347L895 375L915 395L950 445L990 503L990 440L960 410L920 375L880 348Z"/>
<path stroke-width="8.500" fill="none" stroke="#3ccc4c" d="M22 439V428M35 439V417M48 439V410M61 439V402M74 439V396M87 439V393M100 439V384M113 439V382M126 439V390M139 439V393M152 439V394M165 439V402M178 439V412M191 439V426M605 439V427M618 439V423M630 439V420M641 439V402M654 439V405M667 439V415M680 439V420M693 439V420M706 439V406M718 439V390M731 439V378M744 439V382M757 439V394M770 439V402M783 439V405M796 439V410M809 439V420M822 439V422"/>
<path stroke-width="8.500" fill="none" stroke="#e06464" d="M218 439V443M231 439V446M243 439V450M256 439V452M269 439V458M281 439V462M294 439V452M307 439V450M320 439V450M333 439V449M346 439V446M359 439V446M372 439V446M385 439V446M398 439V449M410 439V452M423 439V455M436 439V460M449 439V465M462 439V465M474 439V452M487 439V450M500 439V452M513 439V460M526 439V460M538 439V456M551 439V456M564 439V458M577 439V465M590 439V450M875 439V445M887 439V452M899 439V468M912 439V472M925 439V478M938 439V486M951 439V490M964 439V495M977 439V500M989 439V503"/>
<path class="ln" d="M12 439H1320"/>
<path stroke="#3a50e8" stroke-width="2.800" fill="none" d="M12 518L50 485L85 440L110 395L130 385L160 365L180 370L205 395L240 408L280 432L300 425L340 425L390 432L430 450L455 468L480 465L510 480L545 483L578 502L600 475L625 460L640 425L695 420L715 390L735 340L750 331L780 330L790 325L825 330L840 345L870 347L895 375L915 395L950 445L990 503"/>
<path stroke="#e87878" stroke-width="2.800" fill="none" d="M12 522L50 505L85 475L120 440L160 405L200 393L240 397L285 415L340 423L400 430L440 443L490 460L540 475L578 490L600 482L640 465L700 435L740 395L770 365L800 350L840 344L880 348L920 375L960 410L990 440"/>
<!-- sto -->
<path fill="#f4cccc" d="M12 770L35 675L60 595L85 565L110 565L125 580L140 590L160 575L178 595L205 685L220 700L235 735L280 808L320 707L335 745L370 695L395 708L410 745L450 830L485 708L500 715L527 793L545 773L575 772L578 793L615 603L655 610L680 662L695 665L730 557L750 570L770 625L800 622L815 628L835 648L875 653L900 770L915 807L950 810L965 827L978 828L990 840L990 830L970 815L940 785L905 720L880 655L840 638L810 625L780 595L760 587L735 620L700 640L670 630L650 620L610 720L578 780L560 768L525 745L495 755L470 795L450 780L425 735L400 713L365 720L340 745L300 775L275 772L245 725L220 670L190 605L160 578L135 580L105 570L80 610L50 690L30 780L12 795Z"/>
<path fill="#b2b4dc" d="M12 770L35 675L60 595L85 565L105 570L80 610L50 690L30 780L12 795ZM295 775L320 707L335 745L370 695L395 708L365 720L340 745L300 775ZM470 795L485 708L500 715L510 750L495 755ZM578 780L615 603L655 610L650 620L610 720ZM700 640L730 557L750 570L760 587L735 620Z"/>
<path class="ln" d="M12 613H1320M12 785H1320"/>
<path stroke="#e87878" stroke-width="2.800" fill="none" stroke-dasharray="9 5" d="M12 795L30 780L50 690L80 610L105 570L135 580L160 578L190 605L220 670L245 725L275 772L300 775L340 745L365 720L400 713L425 735L450 780L470 795L495 755L525 745L560 768L578 780L610 720L650 620L670 630L700 640L735 620L760 587L780 595L810 625L840 638L880 655L905 720L940 785L970 815L990 830"/>
<path stroke="#111" stroke-width="2.800" fill="none" d="M12 770L35 675L60 595L85 565L110 565L125 580L140 590L160 575L178 595L205 685L220 700L235 735L280 808L320 707L335 745L370 695L395 708L410 745L450 830L485 708L500 715L527 793L545 773L575 772L578 793L615 603L655 610L680 662L695 665L730 557L750 570L770 625L800 622L815 628L835 648L875 653L900 770L915 807L950 810L965 827L978 828L990 840"/>
</g>

<!-- LEFT main chart -->
<g transform="translate(0,335) scale(.33333)">
<path class="ln" d="M15 526H1132M15 966H1132"/><path d="M15 927H1132" stroke="#1414dc" stroke-width="6" shape-rendering="crispEdges"/>
<path d="M345 298L800 350L1125 382" stroke="#1414e6" stroke-width="6" fill="none" stroke-dasharray="17 13"/>
<path d="M94 478L190 495L340 550L430 600L490 638M868 495L945 498" stroke="#e81c3c" stroke-width="5" fill="none" stroke-dasharray="15 8"/>
<path d="M15 565L60 510L95 480M505 637L620 590L750 545L850 493M868 495H920" stroke="#2a88ee" stroke-width="5" fill="none" stroke-dasharray="15 9"/>
<path d="M15 865L140 815L315 750L510 695L700 640L800 618L860 616" stroke="#3464e0" stroke-width="3" fill="none" stroke-dasharray="10 7"/>
<path d="M862 616L945 620" stroke="#e87878" stroke-width="3" fill="none" stroke-dasharray="10 7"/>
<path d="M15 695H1132" stroke="#000" stroke-width="5" fill="none" stroke-dasharray="17 13"/>
<g shape-rendering="crispEdges">
<path class="cw" d="M26 380V395M40 345V385M53 310V365M67 322V385M80 360V385M94 378V490M109 475V750M122 660V750M136 690V804M149 605V700M163 603V640M178 610V655M190 615V660M204 575V650M217 600V680M231 640V735M245 640V710M258 640V700M272 640V720M285 620V715M299 680V720M313 625V735M327 520V630M340 515V575M354 550V710M367 635V720M382 630V745M395 650V695M409 590V670M423 590V640M436 590V650M450 570V625M464 560V660M478 525V612M492 545V570M505 530V565M519 520V555M532 460V530M547 435V455M560 425V480M574 470V490M588 478V490M601 480V525M615 495V530M628 515V555M642 520V550M656 520V535M670 495V530M684 495V525M698 505V530M712 495V530M725 495V525M739 465V510M752 475V500M766 480V505M780 445V495M793 445V480M806 405V455M820 405V450M834 360V410M848 360V410M862 518V605M875 545V600M889 545V622M903 527V590M918 540V560M931 530V610M944 480V635M842 378H855"/>
<path fill="#4cc84c" stroke="#111" stroke-width="3" d="M21 382h10v10h-10zM35 352h10v30h-10zM48 343h10v10h-10zM131 696h10v6h-10zM144 625h10v70h-10zM158 620h10v5h-10zM185 633h10v7h-10zM199 634h10v6h-10zM240 647h10v60h-10zM280 677h10v33h-10zM308 631h10v79h-10zM322 562h10v68h-10zM362 661h10v44h-10zM390 667h10v20h-10zM404 595h10v72h-10zM445 587h10v13h-10zM473 553h10v57h-10zM500 547h10v13h-10zM514 530h10v17h-10zM527 460h10v68h-10zM542 443h10v12h-10zM637 533h10v7h-10zM665 506h10v14h-10zM707 503h10v23h-10zM734 472h10v30h-10zM761 490h10v8h-10zM775 473h10v17h-10zM788 449h10v26h-10zM801 407h10v43h-10zM829 365h10v43h-10zM870 575h10v5h-10zM898 560h10v27h-10z"/>
<path fill="#e06a6a" stroke="#111" stroke-width="3" d="M62 344h10v31h-10zM75 373h10v5h-10zM89 382h10v98h-10zM104 487h10v170h-10zM117 661h10v36h-10zM173 622h10v28h-10zM212 634h10v31h-10zM226 671h10v36h-10zM253 650h10v20h-10zM267 682h10v28h-10zM294 682h10v28h-10zM335 562h10v11h-10zM349 577h10v128h-10zM377 667h10v20h-10zM418 592h10v14h-10zM431 593h10v12h-10zM459 583h10v27h-10zM487 555h10v7h-10zM555 443h10v35h-10zM569 476h10v14h-10zM583 488h10v2h-10zM596 488h10v12h-10zM610 500h10v27h-10zM623 533h10v9h-10zM651 522h10v3h-10zM679 503h10v14h-10zM693 513h10v13h-10zM720 502h10v4h-10zM747 476h10v26h-10zM857 526h10v54h-10zM884 578h10v12h-10zM926 560h10v30h-10zM939 588h10v8h-10z"/>
</g></g>
<text x="7" y="511">10 053,12</text><text x="7" y="642">9 962,56</text><text x="7" y="655">9 953,71</text><text x="352" y="564">Piv M</text>
<text x="6" y="664">© IT-Finance.com  <tspan x="97" style="font-style:italic">Données indicatives</tspan></text>
<path d="M4 666.500H378" stroke="#b9bdc1"/>

<!-- LEFT indicators -->
<g transform="translate(0,585) scale(.33333)">
<path class="ln" d="M15 331H1132M15 415H1132"/>
<path stroke="#111" stroke-width="2.800" fill="none" d="M15 342L30 340L50 337L65 345L85 346L108 398L120 405L135 406L150 388L165 388L180 393L195 388L210 390L230 400L245 385L270 395L285 388L300 395L325 365L340 365L355 388L370 380L385 385L410 367L430 367L445 366L465 370L480 361L505 360L525 352L540 340L550 340L570 353L590 352L630 367L650 367L670 358L695 368L710 358L720 362L740 350L750 360L765 358L795 345L810 346L835 328L850 335L862 391L890 391L905 384L920 385L930 390L945 391"/>
<path fill="#efb0b0" d="M60 510L90 515L120 550L150 575L190 610L230 635L275 652L310 660L305 666L275 662L230 658L170 640L135 615L110 585L80 520ZM860 575L865 573L900 585L945 605L945 625L910 610L880 597Z"/>
<path fill="#b8efb8" d="M340 636L370 645L400 640L430 628L460 620L500 605L545 572L575 566L600 566L625 575L600 576L560 590L510 615L470 628L430 638L385 646L340 648ZM790 582L825 568L848 560L860 575L835 572Z"/>
<path stroke-width="8.500" fill="none" stroke="#3ccc4c" d="M25 607V604M327 607V604M340 607V597M354 607V602M367 607V603M408 607V600M423 607V597M437 607V594M450 607V591M464 607V594M478 607V591M492 607V590M505 607V587M519 607V585M533 607V582M547 607V578M560 607V582M574 607V585M588 607V590M601 607V594M615 607V600M806 607V604M820 607V600M834 607V594M848 607V594"/>
<path stroke-width="8.500" fill="none" stroke="#e06464" d="M67 607V610M80 607V612M94 607V627M109 607V648M122 607V666M136 607V668M149 607V666M163 607V660M178 607V657M190 607V652M204 607V643M217 607V641M231 607V640M245 607V635M258 607V633M272 607V630M285 607V625M299 607V622M313 607V617M645 607V611M658 607V611M672 607V611M686 607V611M700 607V614M714 607V611M728 607V611M741 607V611M755 607V611M768 607V611M862 607V610M875 607V624M889 607V628M903 607V632M918 607V631M931 607V630M944 607V632"/>
<path class="ln" d="M15 607H1132"/>
<path stroke="#3a50e8" stroke-width="2.800" fill="none" d="M15 510L60 510L80 520L110 585L135 615L170 640L230 658L275 662L305 666L320 655L340 636L370 645L400 640L430 628L460 620L500 605L545 572L575 566L600 566L625 575L690 585L720 585L790 582L825 568L848 560L860 575L880 597L910 610L945 625"/>
<path stroke="#e87878" stroke-width="2.800" fill="none" d="M15 512L60 510L90 515L120 550L150 575L190 610L230 635L275 652L310 660L340 648L385 646L430 638L470 628L510 615L560 590L600 576L650 576L720 582L790 582L835 572L865 573L900 585L945 605"/>
</g>

<!-- Axis ticks -->
<path class="mk" d="M378 441h5M378 470h5M378 500h5M378 530h5M378 559h5M378 589h5M378 618h5M378 648h5M378 676h5M378 708h5M378 740h5M378 758h5M378 769h5M378 781h5M378 802h5M880 152h5M880 191h5M880 231h5M880 271h5M880 311h5M880 351h5M880 391h5M880 430h5M880 470h5M880 509h5M880 535h5M880 575h5M880 615h5M880 632h5M880 652h5M880 677h5M880 700h5M880 715h5M880 733h5M880 752h5M880 787h5M880 803h5M1381 145h5M1381 176h5M1381 207h5M1381 238h5M1381 269h5M1381 300h5M1381 331h5M1381 362h5M1381 393h5M1381 424h5M1381 455h5M1381 486h5M1381 517h5M1381 537h5M1381 553h5M1381 570h5M1381 604h5M1381 620h5M1381 636h5M1381 653h5M1381 710h5M1381 729h5M1381 748h5M1381 767h5M516 811v5M779 811v5M973 811v5M1029 811v5M1072 811v5M1123 811v5M1274 811v5M1308 811v5M36 811v5M91 811v5M145 811v5M200 811v5M255 811v5M287 811v5M314 811v5"/>

<!-- Left axis -->
<text x="385" y="445" class="axb">10 100</text><text x="385" y="475" class="ax">10 080</text>
<rect x="383.500" y="495.500" width="44" height="14" class="box"/><text x="385" y="506" style="fill:#e81c3c">10 058,2</text>
<rect x="383.500" y="534.500" width="44" height="14" class="box"/><text x="385" y="545" style="fill:#e87878">10 032,0</text>
<rect x="382.500" y="523.500" width="45" height="14" fill="url(#yl)" stroke="#c8ccd0"/><text x="385" y="534">10 037,7</text>
<rect x="383" y="545" width="34" height="14" fill="#a4e8a4"/><text x="385" y="556">6m12s</text>
<rect x="383.500" y="560.500" width="44" height="14" class="box"/><text x="385" y="571">10 014,9</text>
<text x="385" y="593" class="axb">10 000</text><text x="385" y="622" class="ax">9 980</text><text x="385" y="652" class="ax">9 960</text>
<text x="385" y="680" class="axb">100</text><text x="385" y="712" class="ax">50</text><rect x="383.500" y="707.500" width="35" height="14" class="box"/><text x="385" y="718">40,267</text><text x="385" y="744" class="axb">0</text>
<text x="385" y="761" class="ax">20</text><text x="385" y="773" class="ax">10</text>
<rect x="383.500" y="775.500" width="35" height="14" class="box"/><text x="385" y="786" style="fill:#e87878">1,0462</text>
<rect x="383.500" y="785.500" width="39" height="13" class="box"/><text x="385" y="796" style="fill:#3a50e8">-3,0454</text>
<rect x="383.500" y="795.500" width="39" height="13" class="box"/><text x="385" y="806" style="fill:#e87878">-4,0916</text>
<path d="M378 794h5" stroke="#1414dc"/>
<g class="ax">
<text x="37" y="827" class="m">13:00</text><text x="92" y="827" class="m">15:00</text><text x="146" y="827" class="m">17:00</text><text x="200" y="827" class="m">19:00</text><text x="255" y="827" class="m">21:00</text><text x="287" y="827" class="m axb">11</text><text x="315" y="827" class="m">09:00</text>
</g>

<!-- Middle axis -->
<text x="887" y="156" class="ax">10 090</text><text x="887" y="195" class="ax">10 080</text><text x="887" y="235" class="ax">10 070</text><text x="887" y="275" class="ax">10 060</text>
<rect x="885.500" y="308.500" width="44" height="14" class="box"/><text x="887" y="319">10 049,1</text>
<text x="887" y="354" class="ax">10 040</text>
<rect x="885.500" y="331.500" width="44" height="14" class="box"/><text x="887" y="342" style="fill:#e87878">10 043,2</text>
<rect x="885.500" y="353.500" width="44" height="14" fill="url(#yl)" stroke="#c8ccd0"/><text x="887" y="364">10 037,7</text>
<rect x="885" y="369" width="19" height="14" fill="#ffe94a"/><text x="887" y="380">12s</text>
<text x="887" y="395" class="ax">10 030</text>
<text x="887" y="434" class="ax">10 020</text>
<rect x="885.500" y="430.500" width="44" height="13" class="box"/><text x="887" y="441" style="fill:#209020">10 018,5</text>
<rect x="885.500" y="445.500" width="44" height="13" class="box"/><text x="887" y="456">10 014,9</text>
<text x="887" y="474" class="ax">10 010</text><text x="887" y="514" class="axb">10 000</text>
<text x="887" y="540" class="axb">100</text><text x="887" y="578" class="ax">50</text><rect x="885.500" y="575.500" width="35" height="14" class="box"/><text x="887" y="586">42,239</text><text x="887" y="620" class="axb">0</text>
<text x="887" y="636" class="ax">5</text>
<rect x="885.500" y="638.500" width="35" height="13" class="box"/><text x="887" y="649" style="fill:#38bf4a">0,1403</text>
<rect x="885.500" y="647.500" width="39" height="11" class="box"/><text x="887" y="657" style="fill:#3a50e8">-0,2854</text>
<rect x="885.500" y="655.500" width="39" height="13" class="box"/><text x="887" y="666" style="fill:#e87878">-0,4254</text>
<text x="887" y="681" class="ax">-5</text><text x="887" y="704" class="ax">-10</text>
<text x="887" y="720" class="axb">100</text><text x="887" y="737" class="ax">80</text>
<rect x="885.500" y="746.500" width="35" height="13" class="box"/><text x="887" y="757">50,096</text>
<rect x="885.500" y="760.500" width="35" height="14" class="box"/><text x="887" y="771" style="fill:#e87878">49,806</text>
<text x="887" y="791" class="ax">20</text><text x="887" y="808" class="axb">0</text>
<text x="515" y="827" class="m axb">11</text><text x="779" y="827" class="m ax">09:00</text>

<!-- Right axis -->
<text x="1388" y="149" class="ax">10 085</text><text x="1388" y="180" class="ax">10 080</text><text x="1388" y="211" class="ax">10 075</text><text x="1388" y="242" class="ax">10 070</text><text x="1388" y="273" class="ax">10 065</text><text x="1388" y="304" class="ax">10 060</text><text x="1388" y="335" class="ax">10 055</text>
<text x="1388" y="362" class="ax">10 050</text>
<rect x="1385.500" y="361.500" width="46" height="14" class="box"/><text x="1388" y="372">10 049,1</text>
<text x="1388" y="397" class="ax">10 045</text><text x="1388" y="428" class="ax">10 040</text>
<rect x="1385.500" y="432.500" width="46" height="14" fill="url(#yl)" stroke="#c8ccd0"/><text x="1388" y="443">10 037,7</text>
<rect x="1385" y="448" width="23" height="14" fill="#a4e8a4"/><text x="1388" y="459">19T</text><text x="1409" y="459" class="ax">35</text>
<text x="1388" y="490" class="ax">10 030</text><text x="1388" y="521" class="ax">10 025</text>
<text x="1388" y="542" class="axb">100</text><text x="1388" y="557" class="ax">80</text><text x="1388" y="574" class="ax">60</text>
<rect x="1386.500" y="583.500" width="35" height="14" class="box"/><text x="1388" y="594">36,711</text>
<text x="1388" y="608" class="ax">20</text><text x="1388" y="625" class="axb">0</text>
<text x="1388" y="640" class="ax">4</text><text x="1388" y="657" class="ax">2</text>
<rect x="1385.500" y="665.500" width="40" height="14" class="box"/><text x="1387" y="676" style="fill:#e87878">-0,0212</text>
<rect x="1385.500" y="679.500" width="40" height="10" class="box"/>
<rect x="1385.500" y="688.500" width="40" height="14" class="box"/><text x="1387" y="699" style="fill:#3a50e8">-2,3014</text>
<text x="1388" y="715" class="axb">100</text><text x="1388" y="733" class="ax">80</text><text x="1388" y="752" class="ax">60</text><text x="1388" y="771" class="ax">40</text>
<text x="1388" y="789" class="ax">20</text>
<rect x="1385.500" y="785.500" width="35" height="12" class="box"/><text x="1387" y="796" style="fill:#e87878">6,0540</text>
<rect x="1385.500" y="795.500" width="35" height="14" class="box"/><text x="1387" y="806">0,3509</text>
<text x="973" y="827" class="m ax">08:32</text><text x="1029" y="827" class="m ax">08:40</text><text x="1072" y="827" class="m ax">08:52</text><text x="1123" y="828" class="m axb">09:00</text><text x="1274" y="827" class="m ax">09:04</text><text x="1308" y="827" class="m ax">09:08</text>
</svg>
</body></html>
